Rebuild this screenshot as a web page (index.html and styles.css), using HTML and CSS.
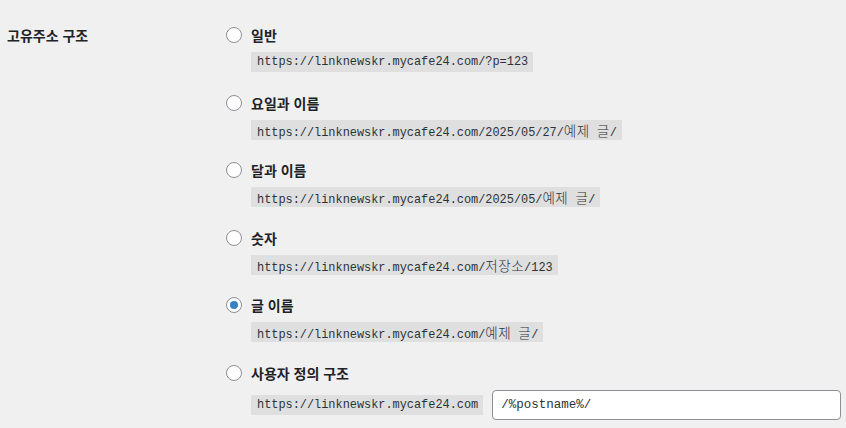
FILE: index.html
```html
<!DOCTYPE html>
<html lang="ko">
<head>
    <meta charset="UTF-8">
    <meta name="viewport" content="width=device-width, initial-scale=1.0">
    <title>고유주소 설정</title>
    <link rel="stylesheet" href="styles.css">
</head>
<body>
    <div class="form-row">
        <div class="row-title">고유주소 구조</div>
        <div class="row-options">
            <div class="option">
                <label class="choice"><input type="radio" name="structure"> 일반</label>
                <code>https://linknewskr.mycafe24.com/?p=123</code>
            </div>
            <div class="option">
                <label class="choice"><input type="radio" name="structure"> 요일과 이름</label>
                <code>https://linknewskr.mycafe24.com/2025/05/27/<span class="ko">예제</span> <span class="ko">글</span>/</code>
            </div>
            <div class="option">
                <label class="choice"><input type="radio" name="structure"> 달과 이름</label>
                <code>https://linknewskr.mycafe24.com/2025/05/<span class="ko">예제</span> <span class="ko">글</span>/</code>
            </div>
            <div class="option">
                <label class="choice"><input type="radio" name="structure"> 숫자</label>
                <code>https://linknewskr.mycafe24.com/<span class="ko">저장소</span>/123</code>
            </div>
            <div class="option">
                <label class="choice"><input type="radio" name="structure" checked> 글 이름</label>
                <code>https://linknewskr.mycafe24.com/<span class="ko">예제</span> <span class="ko">글</span>/</code>
            </div>
            <div class="option last">
                <label class="choice"><input type="radio" name="structure"> 사용자 정의 구조</label>
                <div class="custom">
                    <code>https://linknewskr.mycafe24.com</code>
                    <input type="text" class="custom-input" value="/%postname%/">
                </div>
            </div>
        </div>
    </div>
</body>
</html>
```

FILE: styles.css
```css
body {
    margin: 0;
    background-color: #f0f0f1;
    color: #1d2327;
    font-family: "Noto Sans CJK KR", "Noto Sans", sans-serif;
    font-size: 14px;
}
.form-row {
    display: flex;
    padding-top: 25px;
}
.row-title {
    width: 219px;
    padding-left: 7px;
    font-weight: 700;
    line-height: 20px;
}
.row-options {
    flex: 1;
}
.option {
    display: flex;
    flex-direction: column;
    align-items: flex-start;
    gap: 7px;
    margin-bottom: 20.6px;
}
.choice {
    display: flex;
    align-items: center;
    height: 20px;
    font-weight: 700;
    gap: 9px;
}
.choice input {
    appearance: none;
    margin: 0;
    width: 16px;
    height: 16px;
    border: 1px solid #8c8f94;
    border-radius: 50%;
    background: #fff;
    display: grid;
    place-items: center;
}
.choice input:checked::before {
    content: "";
    width: 8px;
    height: 8px;
    border-radius: 50%;
    background: #3582c4;
}
code {
    display: block;
    margin-left: 25px;
    padding: 0 5px 0 6px;
    height: 20px;
    line-height: 20px;
    background: rgba(0, 0, 0, 0.07);
    color: #2c3338;
    font-family: "Liberation Mono", "Noto Sans CJK KR", monospace;
    font-size: 11.9px;
    white-space: pre;
}
code .ko {
    font-family: "Noto Sans CJK KR", sans-serif;
    font-size: 13.5px;
    font-weight: 300;
    letter-spacing: 0.5px;
}
.custom {
    display: flex;
    align-items: center;
    gap: 9px;
}
.custom-input {
    width: 349px;
    height: 30px;
    box-sizing: border-box;
    border: 1px solid #8c8f94;
    border-radius: 4px;
    padding: 0 8px;
    font-family: "Liberation Mono", monospace;
    font-size: 12.5px;
    color: #2c3338;
    background: #fff;
}
```
